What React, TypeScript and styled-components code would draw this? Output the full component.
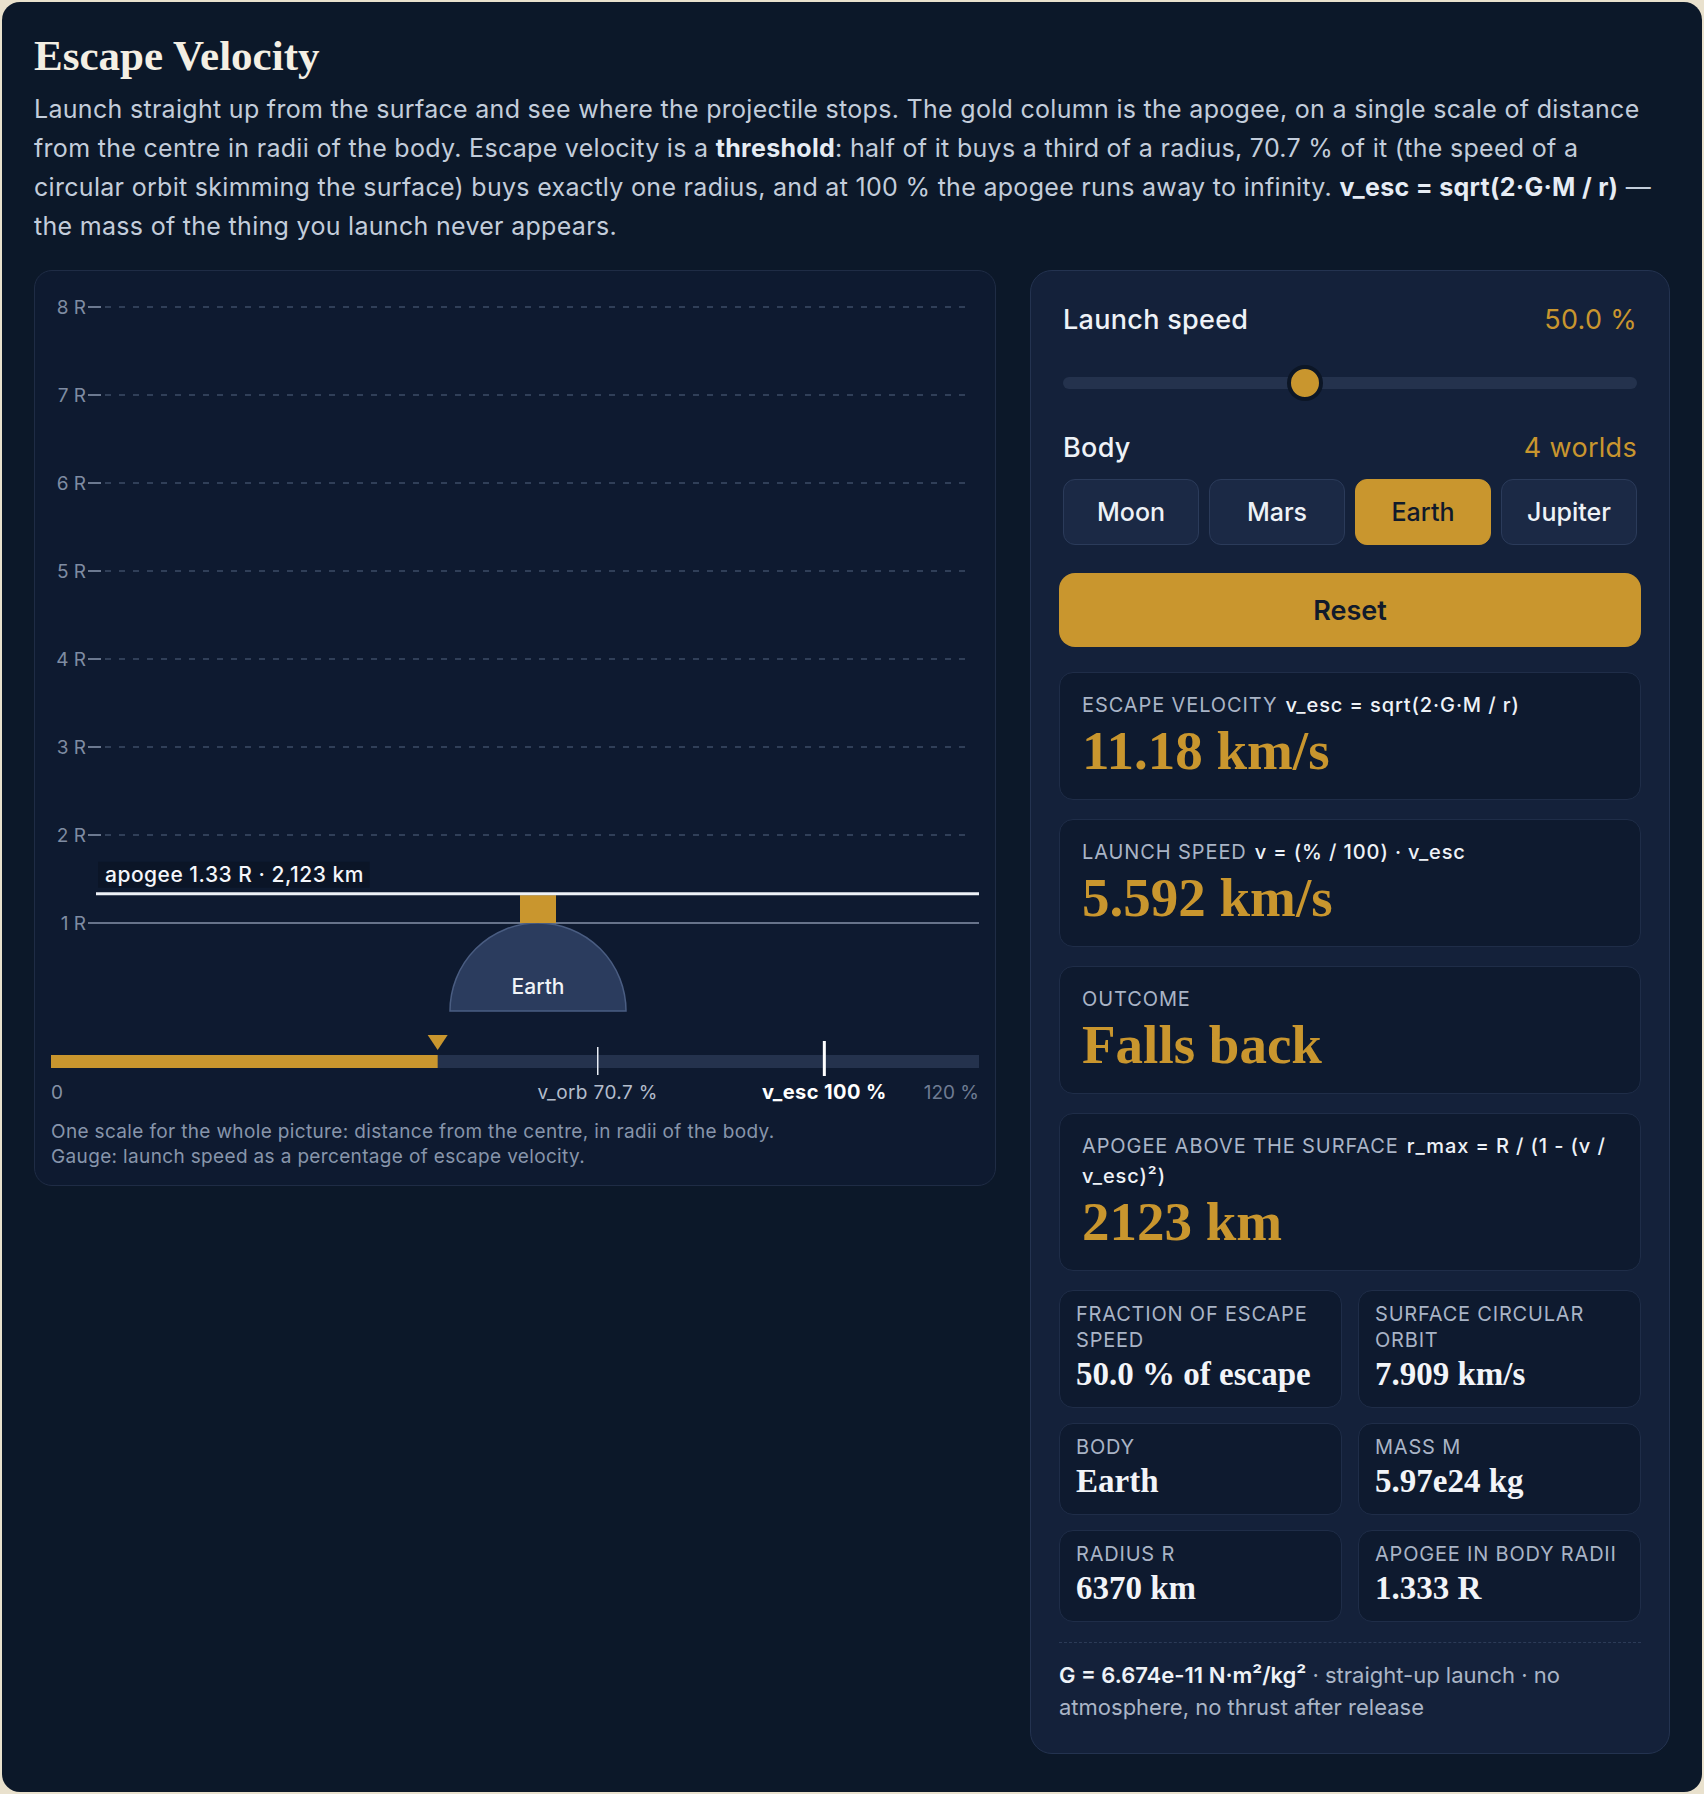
import { useState } from 'react';
import styled, { createGlobalStyle } from 'styled-components';

const SANS = `Inter, "Noto Sans", "Liberation Sans", sans-serif`;
const SERIF = `"Liberation Serif", "DejaVu Serif", serif`;
const GOLD = '#c9962e';
const G = 6.674e-11;

const BODIES = [
  { name: 'Moon', mass: 7.35e22, radiusKm: 1737 },
  { name: 'Mars', mass: 6.42e23, radiusKm: 3390 },
  { name: 'Earth', mass: 5.97e24, radiusKm: 6370 },
  { name: 'Jupiter', mass: 1.898e27, radiusKm: 69911 },
];

const GlobalStyle = createGlobalStyle`
  html, body { margin: 0; }
  body {
    background: #e9e1cd;
    padding: 2px;
    font-family: ${SANS};
  }
  * { box-sizing: border-box; }
`;

const Card = styled.main`
  min-height: 1790px;
  background: #0c1829;
  border-radius: 18px;
  padding: 31px 32px 36px;
  color: #e8edf5;
`;

const Title = styled.h1`
  margin: 0;
  font-family: ${SERIF};
  font-size: 43px;
  line-height: 46px;
  font-weight: 700;
  color: #f4efe4;
`;

const Lede = styled.p`
  margin: 11px 0 0;
  font-size: 25px;
  line-height: 39px;
  letter-spacing: 0.3px;
  color: #c3cddb;
  strong {
    color: #e6ecf4;
    font-weight: 700;
  }
`;

const Layout = styled.div`
  margin-top: 24px;
  display: grid;
  grid-template-columns: 962px 1fr;
  gap: 34px;
  align-items: start;
`;

const ChartPanel = styled.section`
  border: 1px solid #1f2c45;
  border-radius: 18px;
  background: #0e1a30;
  padding: 16px;
`;

const ChartSvg = styled.svg`
  display: block;
  width: 100%;
  height: 820px;
  font-family: ${SANS};
`;

const Caption = styled.p`
  margin: 12px 0 0;
  font-size: 19px;
  line-height: 25px;
  letter-spacing: 0.35px;
  color: #8795ab;
`;

const ControlPanel = styled.aside`
  border: 1px solid #243350;
  border-radius: 22px;
  background: #14213a;
  padding: 32px 28px 30px;
`;

const Controls = styled.div`
  padding: 0 4px;
`;

const FieldHead = styled.div<{ $gap?: number }>`
  display: flex;
  justify-content: space-between;
  align-items: baseline;
  margin-top: ${(p) => p.$gap ?? 0}px;
  font-size: 27px;
  line-height: 34px;
  letter-spacing: 0.3px;
`;

const FieldLabel = styled.span`
  color: #eef2f7;
  font-weight: 500;
`;

const FieldValue = styled.span`
  color: ${GOLD};
`;

const Slider = styled.input`
  display: block;
  width: 100%;
  height: 36px;
  margin: 28px 0 0;
  background: transparent;
  -webkit-appearance: none;
  appearance: none;
  &::-webkit-slider-runnable-track {
    height: 12px;
    border-radius: 6px;
    background: #24324d;
  }
  &::-webkit-slider-thumb {
    -webkit-appearance: none;
    width: 36px;
    height: 36px;
    margin-top: -12px;
    border-radius: 50%;
    background: ${GOLD};
    border: 4px solid #0c1626;
    box-sizing: border-box;
  }
  &::-moz-range-track {
    height: 12px;
    border-radius: 6px;
    background: #24324d;
  }
  &::-moz-range-thumb {
    width: 28px;
    height: 28px;
    border-radius: 50%;
    background: ${GOLD};
    border: 4px solid #0c1626;
  }
`;

const BodyRow = styled.div`
  margin-top: 14px;
  display: grid;
  grid-template-columns: repeat(4, 1fr);
  gap: 10px;
`;

const BodyButton = styled.button<{ $active: boolean }>`
  height: 66px;
  border-radius: 12px;
  border: 1px solid ${(p) => (p.$active ? GOLD : '#2b3b5a')};
  background: ${(p) => (p.$active ? GOLD : '#1b2945')};
  color: ${(p) => (p.$active ? '#111a2b' : '#eef2f7')};
  font-family: ${SANS};
  font-size: 25px;
  font-weight: 500;
  cursor: pointer;
`;

const ResetButton = styled.button`
  display: block;
  width: 100%;
  height: 74px;
  margin-top: 28px;
  border: none;
  border-radius: 16px;
  background: ${GOLD};
  color: #111a2b;
  font-family: ${SANS};
  font-size: 27px;
  font-weight: 600;
  cursor: pointer;
`;

const StatList = styled.div`
  margin-top: 25px;
  display: flex;
  flex-direction: column;
  gap: 19px;
`;

const StatCard = styled.div`
  border: 1px solid #1f2d48;
  border-radius: 14px;
  background: #0e1a2f;
  padding: 17px 22px 20px;
`;

const StatLabel = styled.div`
  font-size: 20px;
  line-height: 30px;
  letter-spacing: 0.9px;
  color: #a9b4c6;
  text-transform: uppercase;
`;

const Formula = styled.span`
  margin-left: 8px;
  text-transform: none;
  color: #eef2f7;
  font-weight: 500;
`;

const StatValue = styled.div`
  margin-top: 3px;
  font-family: ${SERIF};
  font-size: 55px;
  line-height: 56px;
  font-weight: 700;
  color: ${GOLD};
`;

const MiniGrid = styled.div`
  display: grid;
  grid-template-columns: 1fr 1fr;
  gap: 15px 16px;
`;

const MiniCard = styled.div`
  border: 1px solid #1f2d48;
  border-radius: 14px;
  background: #0e1a2f;
  padding: 10px 16px 14px;
`;

const MiniLabel = styled.div`
  font-size: 20px;
  line-height: 26px;
  letter-spacing: 0.8px;
  color: #a9b4c6;
  text-transform: uppercase;
`;

const MiniValue = styled.div`
  margin-top: 2px;
  font-family: ${SERIF};
  font-size: 33px;
  line-height: 38px;
  font-weight: 700;
  color: #f2f4f8;
`;

const Divider = styled.hr`
  margin: 20px 0 0;
  border: none;
  border-top: 1px dashed #2c3b57;
`;

const Footnote = styled.p`
  margin: 16px 0 0;
  font-size: 22px;
  line-height: 32px;
  color: #aab5c6;
  strong {
    color: #eef2f7;
    font-weight: 600;
  }
`;

// chart geometry, in svg units
const CW = 928;
const UNIT = 88;
const CENTRE_Y = 724;
const CENTRE_X = 487;
const GAUGE_MAX = 120;
const GAUGE_Y = 768;
const gx = (p: number) => (p / GAUGE_MAX) * CW;
const ry = (r: number) => CENTRE_Y - r * UNIT;

type ChartProps = { pct: number; apogeeR: number; apogeeKm: number; body: string };

const Chart = ({ pct, apogeeR, apogeeKm, body }: ChartProps) => {
  const escaped = pct >= 100;
  const apY = ry(escaped ? 8.3 : Math.min(apogeeR, 8.3));
  const label = escaped
    ? 'apogee ∞ · escapes'
    : `apogee ${apogeeR.toFixed(2)} R · ${Math.round(apogeeKm).toLocaleString('en-US')} km`;
  const boxW = label.length * 10.9 + 10;
  const marker = gx(Math.min(pct, GAUGE_MAX));
  const orb = gx(70.7);
  const esc = gx(100);

  return (
    <ChartSvg viewBox="0 0 928 820">
      {[8, 7, 6, 5, 4, 3, 2].map((n) => (
        <g key={n}>
          <text x={35} y={ry(n) + 7} fontSize={19} fill="#7f8ca2" textAnchor="end">{`${n} R`}</text>
          <line x1={37} x2={50} y1={ry(n)} y2={ry(n)} stroke="#8d9ab0" strokeWidth={1.5} />
          <line x1={54} x2={920} y1={ry(n)} y2={ry(n)} stroke="#3d4c66" strokeWidth={1.5} strokeDasharray="6 8" />
        </g>
      ))}
      <text x={35} y={ry(1) + 7} fontSize={19} fill="#7f8ca2" textAnchor="end">1 R</text>
      <line x1={37} x2={928} y1={ry(1)} y2={ry(1)} stroke="#8692a8" strokeWidth={1.5} />

      <path
        d={`M ${CENTRE_X - UNIT} ${CENTRE_Y} A ${UNIT} ${UNIT} 0 0 1 ${CENTRE_X + UNIT} ${CENTRE_Y} Z`}
        fill="#2b3c5e"
        stroke="#4a5d82"
        strokeWidth={1.5}
      />
      <text x={CENTRE_X} y={707} fontSize={21} fontWeight={500} fill="#f1f4f8" textAnchor="middle">{body}</text>

      <rect x={CENTRE_X - 18} y={apY + 1.5} width={36} height={ry(1) - apY - 1.5} fill={GOLD} />
      <line x1={45} x2={928} y1={apY} y2={apY} stroke="#eef2f7" strokeWidth={3} />
      <rect x={47} y={apY - 32} width={boxW} height={26} fill="#0b1527" />
      <text x={54} y={apY - 12} fontSize={21} fontWeight={500} letterSpacing={0.5} fill="#f4f6fa">{label}</text>

      <rect x={0} y={GAUGE_Y} width={CW} height={13} fill="#24324d" />
      <rect x={0} y={GAUGE_Y} width={marker} height={13} fill={GOLD} />
      <polygon points={`${marker - 10},748 ${marker + 10},748 ${marker},763`} fill={GOLD} />
      <line x1={orb} x2={orb} y1={760} y2={788} stroke="#e8edf5" strokeWidth={1.5} />
      <line x1={esc} x2={esc} y1={754} y2={789} stroke="#ffffff" strokeWidth={3} />

      <text x={0} y={812} fontSize={19} fill="#8592a6">0</text>
      <text x={orb} y={812} fontSize={19} letterSpacing={0.4} fill="#b3bdcc" textAnchor="middle">v_orb 70.7 %</text>
      <text x={esc} y={812} fontSize={20} fontWeight={700} letterSpacing={0.4} fill="#ffffff" textAnchor="middle">v_esc 100 %</text>
      <text x={CW} y={812} fontSize={19} fill="#6f7c93" textAnchor="end">120 %</text>
    </ChartSvg>
  );
};

const App = () => {
  const [pct, setPct] = useState(50);
  const [bodyName, setBodyName] = useState('Earth');
  const body = BODIES.find((b) => b.name === bodyName) ?? BODIES[2];

  const r = body.radiusKm * 1000;
  const vEsc = Math.sqrt((2 * G * body.mass) / r) / 1000;
  const v = (pct / 100) * vEsc;
  const vOrb = vEsc / Math.SQRT2;
  const frac = pct / 100;
  const apogeeR = frac < 1 ? 1 / (1 - frac * frac) : Infinity;
  const apogeeKm = (apogeeR - 1) * body.radiusKm;

  return (
    <>
      <GlobalStyle />
      <Card>
        <Title>Escape Velocity</Title>
        <Lede>
          Launch straight up from the surface and see where the projectile stops. The gold column is the
          apogee, on a single scale of distance from the centre in radii of the body. Escape velocity is
          a <strong>threshold</strong>: half of it buys a third of a radius, 70.7 % of it (the speed of a
          circular orbit skimming the surface) buys exactly one radius, and at 100 % the apogee runs away
          to infinity. <strong>v_esc = sqrt(2·G·M / r)</strong> — the mass of the thing you launch never
          appears.
        </Lede>

        <Layout>
          <ChartPanel>
            <Chart pct={pct} apogeeR={apogeeR} apogeeKm={apogeeKm} body={body.name} />
            <Caption>
              One scale for the whole picture: distance from the centre, in radii of the body.
              <br />
              Gauge: launch speed as a percentage of escape velocity.
            </Caption>
          </ChartPanel>

          <ControlPanel>
            <Controls>
              <FieldHead>
                <FieldLabel>Launch speed</FieldLabel>
                <FieldValue>{pct.toFixed(1)} %</FieldValue>
              </FieldHead>
              <Slider
                type="range"
                min={0}
                max={120}
                step={0.5}
                value={pct}
                onChange={(e) => setPct(Number(e.target.value))}
              />
              <FieldHead $gap={30}>
                <FieldLabel>Body</FieldLabel>
                <FieldValue>{BODIES.length} worlds</FieldValue>
              </FieldHead>
              <BodyRow>
                {BODIES.map((b) => (
                  <BodyButton key={b.name} $active={b.name === bodyName} onClick={() => setBodyName(b.name)}>
                    {b.name}
                  </BodyButton>
                ))}
              </BodyRow>
            </Controls>

            <ResetButton onClick={() => { setPct(50); setBodyName('Earth'); }}>Reset</ResetButton>

            <StatList>
              <StatCard>
                <StatLabel>Escape velocity<Formula>v_esc = sqrt(2·G·M / r)</Formula></StatLabel>
                <StatValue>{vEsc.toPrecision(4)} km/s</StatValue>
              </StatCard>
              <StatCard>
                <StatLabel>Launch speed<Formula>v = (% / 100) · v_esc</Formula></StatLabel>
                <StatValue>{v.toPrecision(4)} km/s</StatValue>
              </StatCard>
              <StatCard>
                <StatLabel>Outcome</StatLabel>
                <StatValue>{frac < 1 ? 'Falls back' : 'Escapes'}</StatValue>
              </StatCard>
              <StatCard>
                <StatLabel>Apogee above the surface<Formula>r_max = R / (1 - (v / v_esc)²)</Formula></StatLabel>
                <StatValue>{frac < 1 ? `${Math.round(apogeeKm)} km` : '∞'}</StatValue>
              </StatCard>

              <MiniGrid>
                <MiniCard>
                  <MiniLabel>Fraction of escape speed</MiniLabel>
                  <MiniValue>{pct.toFixed(1)} % of escape</MiniValue>
                </MiniCard>
                <MiniCard>
                  <MiniLabel>Surface circular orbit</MiniLabel>
                  <MiniValue>{vOrb.toPrecision(4)} km/s</MiniValue>
                </MiniCard>
                <MiniCard>
                  <MiniLabel>Body</MiniLabel>
                  <MiniValue>{body.name}</MiniValue>
                </MiniCard>
                <MiniCard>
                  <MiniLabel>Mass M</MiniLabel>
                  <MiniValue>{body.mass.toExponential(2).replace('e+', 'e')} kg</MiniValue>
                </MiniCard>
                <MiniCard>
                  <MiniLabel>Radius R</MiniLabel>
                  <MiniValue>{body.radiusKm} km</MiniValue>
                </MiniCard>
                <MiniCard>
                  <MiniLabel>Apogee in body radii</MiniLabel>
                  <MiniValue>{frac < 1 ? `${apogeeR.toFixed(3)} R` : '∞'}</MiniValue>
                </MiniCard>
              </MiniGrid>
            </StatList>

            <Divider />
            <Footnote>
              <strong>G = 6.674e-11 N·m²/kg²</strong> · straight-up launch · no atmosphere, no thrust after release
            </Footnote>
          </ControlPanel>
        </Layout>
      </Card>
    </>
  );
};

export default App;
